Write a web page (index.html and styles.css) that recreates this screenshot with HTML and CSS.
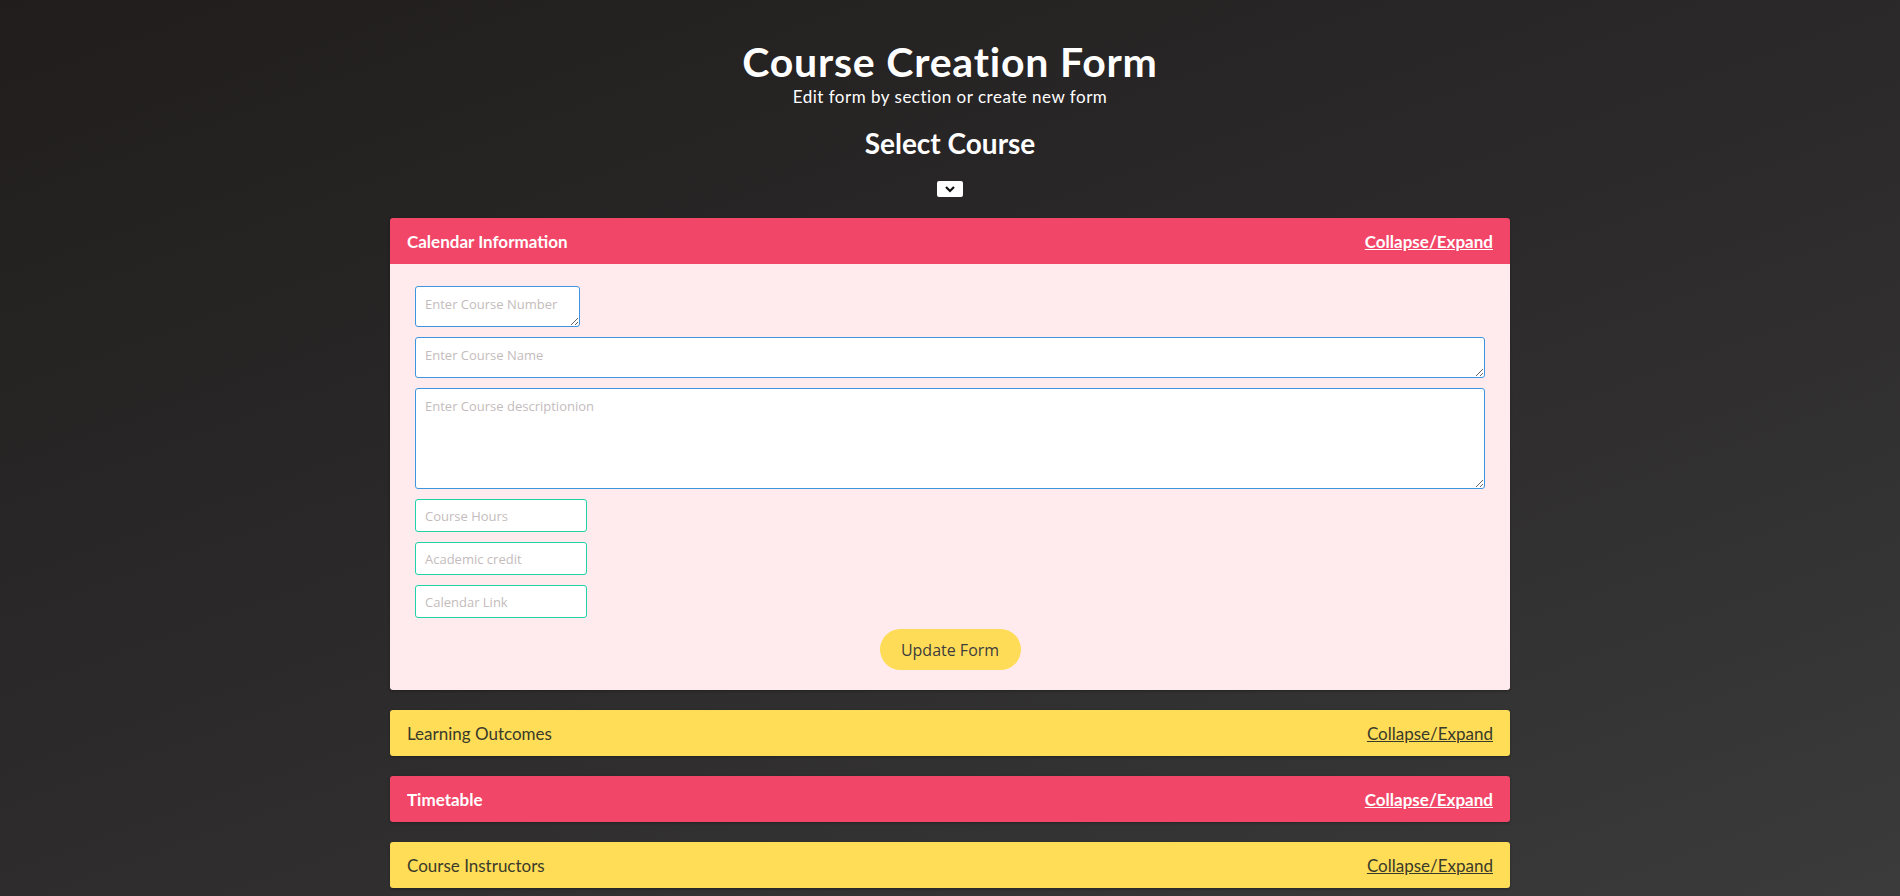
FILE: index.html
```html
<!DOCTYPE html>
<html lang="en">
<head>
<meta charset="utf-8">
<title>Course Creation Form</title>
<link rel="stylesheet" href="styles.css">
</head>
<body>
<main class="page">
  <header class="intro">
    <h1 class="title">Course Creation Form</h1>
    <p class="subtitle">Edit form by section or create new form</p>
    <h2 class="select-title">Select Course</h2>
    <div class="select-box">
      <svg width="12" height="8" viewBox="0 0 12 8"><path d="M2 2 L6 6 L10 2" fill="none" stroke="#111" stroke-width="2.2"/></svg>
    </div>
  </header>

  <section class="card">
    <div class="card-head red">
      <span class="head-title">Calendar Information</span>
      <a class="toggle" href="#">Collapse/Expand</a>
    </div>
    <div class="card-body">
      <textarea class="field blue num" placeholder="Enter Course Number"></textarea>
      <textarea class="field blue name" placeholder="Enter Course Name"></textarea>
      <textarea class="field blue desc" placeholder="Enter Course descriptionion"></textarea>
      <input class="field teal" placeholder="Course Hours">
      <input class="field teal" placeholder="Academic credit">
      <input class="field teal" placeholder="Calendar Link">
      <div class="actions"><button class="btn">Update Form</button></div>
    </div>
  </section>

  <section class="card">
    <div class="card-head yellow">
      <span class="head-title">Learning Outcomes</span>
      <a class="toggle" href="#">Collapse/Expand</a>
    </div>
  </section>

  <section class="card">
    <div class="card-head red">
      <span class="head-title">Timetable</span>
      <a class="toggle" href="#">Collapse/Expand</a>
    </div>
  </section>

  <section class="card">
    <div class="card-head yellow">
      <span class="head-title">Course Instructors</span>
      <a class="toggle" href="#">Collapse/Expand</a>
    </div>
  </section>
</main>
</body>
</html>
```

FILE: styles.css
```css
html, body {
  margin: 0;
  padding: 0;
}
body {
  min-height: 896px;
  background: linear-gradient(160deg, #211d1d 0%, #2c2a2b 50%, #3b3b3b 100%);
  font-family: Lato, "Noto Sans", sans-serif;
  overflow: hidden;
}
.page {
  width: 1120px;
  margin: 0 auto;
  padding-top: 38px;
  display: flex;
  flex-direction: column;
  gap: 20px;
}
.intro {
  display: flex;
  flex-direction: column;
  align-items: center;
  color: #fff;
  margin-bottom: 1px;
}
.title {
  margin: 0;
  font-size: 41px;
  font-weight: 700;
  line-height: 48px;
  letter-spacing: 0.8px;
}
.subtitle {
  margin: 1px 0 0;
  font-size: 17px;
  line-height: 20px;
  letter-spacing: 0.5px;
}
.select-title {
  margin: 20px 0 0;
  font-size: 28px;
  font-weight: 700;
  line-height: 32px;
}
.select-box {
  margin-top: 22px;
  width: 26px;
  height: 16px;
  background: #fff;
  border-radius: 2px;
  display: flex;
  align-items: center;
  justify-content: center;
}
.card {
  border-radius: 3px;
  overflow: hidden;
  box-shadow: 0 1px 3px rgba(0,0,0,0.3);
}
.card-head {
  height: 46px;
  padding: 0 17px;
  display: flex;
  align-items: center;
  justify-content: space-between;
  font-size: 17px;
}
.card-head.red {
  background: #f24668;
  color: #fff;
  font-weight: 700;
}
.card-head.yellow {
  background: #ffdd57;
  color: #3a3a2a;
}
.toggle {
  color: inherit;
  text-decoration: underline;
}
.card-body {
  background: #ffebee;
  padding: 22px 25px 20px;
  display: flex;
  flex-direction: column;
  align-items: flex-start;
  gap: 10px;
}
.field {
  box-sizing: border-box;
  background: #fff;
  border-radius: 3px;
  font-family: "Open Sans", sans-serif;
  font-size: 13px;
  padding: 8px 9px;
  margin: 0;
  color: #333;
}
.field::placeholder {
  color: #c4bcbc;
}
.blue {
  border: 1px solid #3d95e0;
  resize: vertical;
}
.num {
  width: 165px;
  height: 41px;
  resize: both;
}
.name {
  width: 100%;
  height: 41px;
}
.desc {
  width: 100%;
  height: 101px;
}
.teal {
  border: 1px solid #1dd3a7;
  width: 172px;
  height: 33px;
}
.actions {
  align-self: stretch;
  display: flex;
  justify-content: center;
  padding-top: 1px;
}
.btn {
  width: 141px;
  height: 41px;
  border: none;
  border-radius: 21px;
  background: #ffdc58;
  color: #3d3d3d;
  font-family: "Open Sans", sans-serif;
  font-size: 16px;
}
```
